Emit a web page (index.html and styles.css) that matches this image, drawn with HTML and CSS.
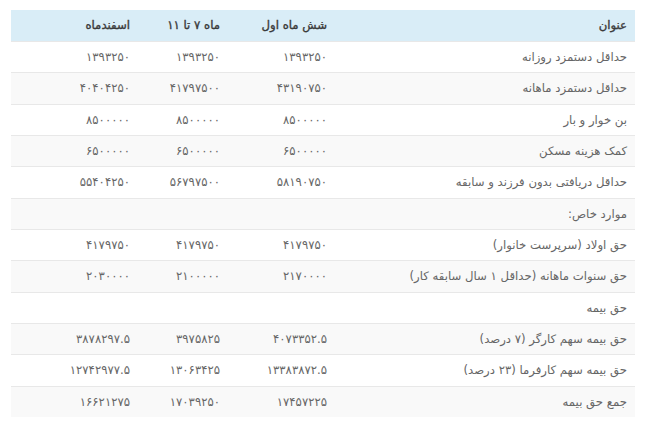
FILE: index.html
```html
<!DOCTYPE html>
<html lang="fa" dir="rtl">
<head>
<meta charset="utf-8">
<title>حداقل دستمزد</title>
<link rel="stylesheet" href="styles.css">
</head>
<body>
<div class="wrap">
<table class="wage-table">
  <colgroup>
    <col class="c-title">
    <col class="c-first">
    <col class="c-mid">
    <col class="c-last">
  </colgroup>
  <thead>
    <tr>
      <th>عنوان</th>
      <th>شش ماه اول</th>
      <th>ماه ۷ تا ۱۱</th>
      <th>اسفندماه</th>
    </tr>
  </thead>
  <tbody>
    <tr><td>حداقل دستمزد روزانه</td><td>۱۳۹۳۲۵۰</td><td>۱۳۹۳۲۵۰</td><td>۱۳۹۳۲۵۰</td></tr>
    <tr><td>حداقل دستمزد ماهانه</td><td>۴۳۱۹۰۷۵۰</td><td>۴۱۷۹۷۵۰۰</td><td>۴۰۴۰۴۲۵۰</td></tr>
    <tr><td>بن خوار و بار</td><td>۸۵۰۰۰۰۰</td><td>۸۵۰۰۰۰۰</td><td>۸۵۰۰۰۰۰</td></tr>
    <tr><td>کمک هزینه مسکن</td><td>۶۵۰۰۰۰۰</td><td>۶۵۰۰۰۰۰</td><td>۶۵۰۰۰۰۰</td></tr>
    <tr><td>حداقل دریافتی بدون فرزند و سابقه</td><td>۵۸۱۹۰۷۵۰</td><td>۵۶۷۹۷۵۰۰</td><td>۵۵۴۰۴۲۵۰</td></tr>
    <tr><td>موارد خاص:</td><td></td><td></td><td></td></tr>
    <tr><td>حق اولاد (سرپرست خانوار)</td><td>۴۱۷۹۷۵۰</td><td>۴۱۷۹۷۵۰</td><td>۴۱۷۹۷۵۰</td></tr>
    <tr><td>حق سنوات ماهانه (حداقل ۱ سال سابقه کار)</td><td>۲۱۷۰۰۰۰</td><td>۲۱۰۰۰۰۰</td><td>۲۰۳۰۰۰۰</td></tr>
    <tr><td>حق بیمه</td><td></td><td></td><td></td></tr>
    <tr><td>حق بیمه سهم کارگر (۷ درصد)</td><td>۴۰۷۳۳۵۲.۵</td><td>۳۹۷۵۸۲۵</td><td>۳۸۷۸۲۹۷.۵</td></tr>
    <tr><td>حق بیمه سهم کارفرما (۲۳ درصد)</td><td>۱۳۳۸۳۸۷۲.۵</td><td>۱۳۰۶۳۴۲۵</td><td>۱۲۷۴۲۹۷۷.۵</td></tr>
    <tr><td>جمع حق بیمه</td><td>۱۷۴۵۷۲۲۵</td><td>۱۷۰۳۹۲۵۰</td><td>۱۶۶۲۱۲۷۵</td></tr>
  </tbody>
</table>
</div>
</body>
</html>
```
FILE: styles.css
```css
html, body {
  margin: 0;
  padding: 0;
  background: #ffffff;
}

.wrap {
  padding: 10px 15px 0 11px;
}

.wage-table {
  width: 624px;
  border-collapse: collapse;
  table-layout: fixed;
  font-family: "DejaVu Sans", "Noto Sans", sans-serif;
  font-size: 11.7px;
  color: #666666;
}

.c-title { width: 300px; }
.c-first { width: 107px; }
.c-mid { width: 90px; }
.c-last { width: 127px; }

.wage-table th,
.wage-table td {
  text-align: right;
  padding: 8px 8px;
  line-height: 14.33px;
  white-space: nowrap;
}

.wage-table thead th {
  background: #d9edf7;
  color: #3a3a3a;
  font-weight: normal;
  -webkit-text-stroke: 0.35px #3a3a3a;
  height: 15px;
}

.wage-table tbody td {
  border-top: 1px solid #e8e8e8;
}

.wage-table tbody tr:nth-child(even) td {
  background: #f9f9f9;
}
```
